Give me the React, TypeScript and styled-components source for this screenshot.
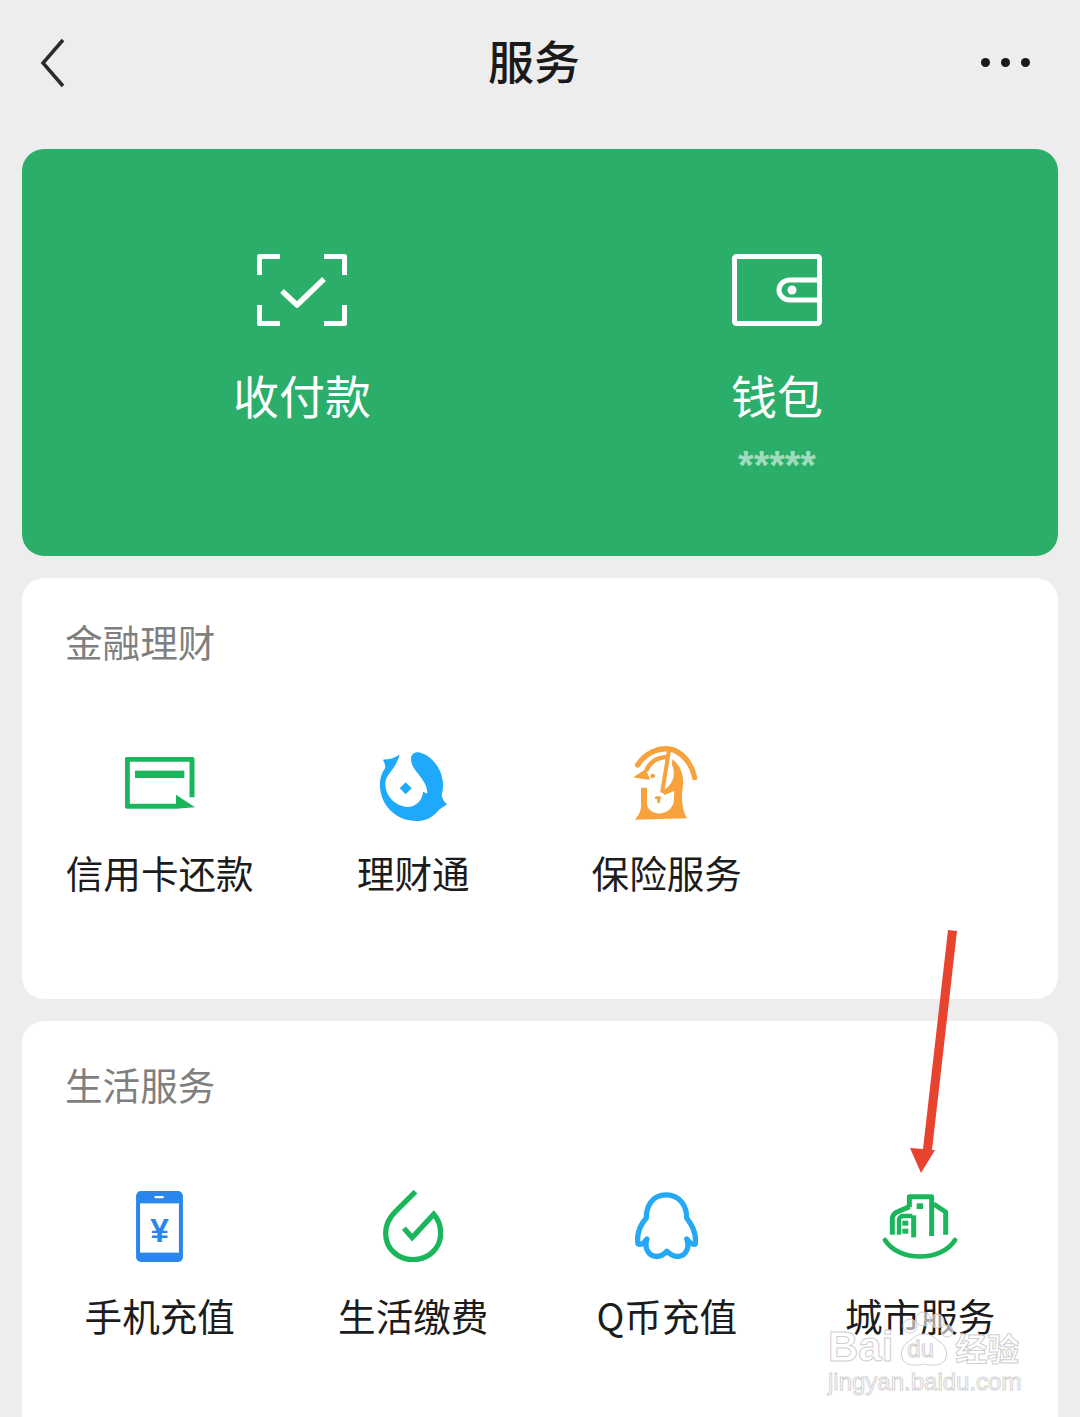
import styled, { createGlobalStyle } from 'styled-components'

const GlobalStyle = createGlobalStyle`
  html, body {
    margin: 0;
    padding: 0;
    background: #ededed;
  }
  body {
    font-family: "Noto Sans CJK SC", "Noto Sans", sans-serif;
  }
`

const Page = styled.div`
  position: relative;
  width: 1080px;
  height: 1417px;
  overflow: hidden;
  background: #ededed;
`

const Header = styled.header`
  display: grid;
  grid-template-columns: 1fr auto 1fr;
  align-items: center;
  height: 125px;
  padding: 0 50px 0 38px;
`

const Back = styled.svg`
  display: block;
  width: 30px;
  height: 50px;
`

const Title = styled.h1`
  margin: 0 0 8px;
  font-size: 46px;
  line-height: 60px;
  font-weight: 500;
  color: #1a1a1a;
`

const More = styled.div`
  display: flex;
  justify-content: flex-end;
  gap: 11px;
`

const Dot = styled.span`
  width: 9px;
  height: 9px;
  border-radius: 50%;
  background: #1a1a1a;
`

const Main = styled.main`
  display: flex;
  flex-direction: column;
  gap: 22px;
  padding: 24px 22px 0;
`

const PayCard = styled.section`
  display: grid;
  grid-template-columns: 475px 475px;
  height: 407px;
  padding: 105px 0 0 42.5px;
  box-sizing: border-box;
  border-radius: 22px;
  background: #2bae6a;
`

const PayItem = styled.div`
  display: flex;
  flex-direction: column;
  align-items: center;
`

const PayLabel = styled.div`
  margin-top: 38px;
  font-size: 46px;
  line-height: 60px;
  color: #fff;
`

const PayHint = styled.div`
  margin-top: 21px;
  font-family: "Liberation Sans", sans-serif;
  font-size: 40px;
  line-height: 40px;
  font-weight: 700;
  color: #9fdcbb;
`

const Section = styled.section`
  height: 421px;
  padding: 39px 11px 0;
  box-sizing: border-box;
  border-radius: 22px;
  background: #fff;
`

const SectionTitle = styled.h2`
  margin: 0 0 0 32px;
  font-size: 37.6px;
  line-height: 48px;
  font-weight: 400;
  color: #7f7f7f;
`

const Grid = styled.div`
  display: grid;
  grid-template-columns: repeat(4, 1fr);
  margin-top: 78px;
`

const Service = styled.div`
  display: flex;
  flex-direction: column;
  align-items: center;
`

const IconSlot = styled.div`
  display: flex;
  align-items: center;
  justify-content: center;
  height: 80px;
`

const ServiceLabel = styled.div`
  margin-top: 25px;
  font-size: 37.6px;
  line-height: 48px;
  color: #1c1c1c;
  white-space: nowrap;
`

const Arrow = styled.svg`
  position: absolute;
  left: 900px;
  top: 925px;
  width: 60px;
  height: 250px;
`

const Watermark = styled.div`
  position: absolute;
  left: 828px;
  top: 1326px;
  width: 200px;
  height: 70px;
`

const MarkRow = styled.div`
  display: flex;
  align-items: center;
  height: 42px;
`

const MarkText = styled.span`
  font-family: "Liberation Sans", sans-serif;
  font-size: 42px;
  line-height: 42px;
  font-weight: 700;
  color: rgba(255, 255, 255, 0.75);
  -webkit-text-stroke: 1px #cfcfcf;
`

const MarkCjk = styled(MarkText)`
  margin-left: 4px;
  font-family: "Noto Sans CJK SC", sans-serif;
  font-size: 32px;
`

const Paw = styled.div`
  position: relative;
  width: 54px;
  height: 42px;
  margin-left: 4px;

  svg {
    overflow: visible;
  }
`

const PawText = styled.span`
  position: absolute;
  left: 10px;
  top: 11px;
  font-family: "Liberation Sans", sans-serif;
  font-size: 24px;
  line-height: 24px;
  color: rgba(255, 255, 255, 0.7);
  -webkit-text-stroke: 1px #cfcfcf;
`

const MarkUrl = styled.div`
  font-family: "Liberation Sans", sans-serif;
  font-size: 24px;
  line-height: 28px;
  color: #fff;
  -webkit-text-stroke: 1px #d4d4d4;
  white-space: nowrap;
`

const ScanIcon = () => (
  <svg width="90" height="72" viewBox="0 0 90 72" fill="none" stroke="#fff" strokeWidth="5" strokeLinejoin="round">
    <path d="M2.5 21V2.5H23M67 2.5H87.5V21M2.5 51V69.5H23M67 69.5H87.5V51" />
    <path d="M25 37L40 51L67 25" strokeWidth="5.5" />
  </svg>
)

const WalletIcon = () => (
  <svg width="90" height="72" viewBox="0 0 90 72" fill="none" stroke="#fff" strokeWidth="5" strokeLinejoin="round">
    <rect x="2.5" y="2.5" width="85" height="67" rx="2" />
    <path d="M87.5 26H58C52 26 47 30.5 47 36C47 41.5 52 46 58 46H87.5" />
    <circle cx="60" cy="36" r="4.5" fill="#fff" stroke="none" />
  </svg>
)

const CardIcon = () => (
  <svg width="70" height="52" viewBox="72 85 210 156" fill="none">
    <path d="M273 206V92H79V233H226" stroke="#1bb55c" strokeWidth="15" strokeLinejoin="round" />
    <rect x="102" y="126" width="148" height="22" fill="#1bb55c" />
    <path d="M225 198L282 236L225 240Z" fill="#1bb55c" />
  </svg>
)

const FishIcon = () => (
  <svg width="80" height="80" viewBox="0 -6 240 240">
    <path
      fill="#1fa9fb"
      d="M80 28C65 40 48 44 30 44C34 52 37 60 37 68C22 88 18 112 22 136C30 190 75 228 130 228C158 228 182 216 198 194L222 178C212 170 208 160 206 150C222 95 190 40 145 24C128 18 114 26 114 42C114 70 140 85 155 115C160 125 163 135 163 146L150 140C148 172 120 192 90 184C55 174 32 140 38 108C42 85 70 70 80 28Z"
    />
    <path fill="#1fa9fb" d="M98 112L116 130L98 148L80 130Z" />
  </svg>
)

const UmbrellaIcon = () => (
  <svg width="80" height="85" viewBox="0 0 240 255" fill="none" stroke="#f7a33d" strokeLinecap="round" strokeLinejoin="round">
    <path d="M32 72C55 35 95 20 125 24C165 28 195 70 203 110" strokeWidth="16" />
    <path d="M60 85C70 62 92 50 118 48" strokeWidth="14" />
    <path d="M125 35L106 150" strokeWidth="12" />
    <path d="M24 108L55 88L66 114Z" fill="#f7a33d" strokeWidth="5" />
    <circle cx="77" cy="105" r="7" fill="#f7a33d" stroke="none" />
    <path d="M88 170H98M95 172V182" strokeWidth="9" />
    <path
      fill="#f7a33d"
      stroke="none"
      d="M136 55C168 78 172 115 166 150C163 182 167 210 180 232L24 236C34 224 42 212 42 196V140L60 140V190C64 224 125 230 140 185L142 150L112 162L104 150C138 135 148 100 135 72Z"
    />
  </svg>
)

const PhoneIcon = () => (
  <svg width="47" height="71" viewBox="80 48 140 212">
    <rect x="80" y="48" width="140" height="212" rx="15" fill="#2a86ea" />
    <rect x="92" y="85" width="116" height="147" fill="#fff" />
    <rect x="135" y="63" width="28" height="7" rx="3" fill="#fff" />
    <text x="150" y="200" textAnchor="middle" fontFamily="Liberation Sans" fontWeight="700" fontSize="100" fill="#2a86ea">
      ¥
    </text>
  </svg>
)

const BillIcon = () => (
  <svg width="60" height="72" viewBox="822 45 181 217" fill="none" stroke="#1bb55c" strokeWidth="16">
    <path d="M885 160L910 188L975 118C990 135 996 155 996 175C996 220 960 255 912 255C865 255 830 220 830 175C830 150 840 130 858 112L920 50" />
  </svg>
)

const QQIcon = () => (
  <svg width="63" height="68" viewBox="76 184 190 204" fill="none" stroke="#25a9f6" strokeWidth="16" strokeLinejoin="round">
    <path d="M170 192C125 192 110 230 110 262C90 285 80 310 85 340C95 345 105 335 112 325C105 345 110 375 140 378C155 378 165 370 172 362C180 370 190 378 205 378C235 375 240 345 232 325C240 335 250 345 258 340C262 310 250 285 232 262C232 230 215 192 170 192Z" />
  </svg>
)

const CityIcon = () => (
  <svg width="90" height="80" viewBox="0 0 270 240" fill="none" stroke="#1bb55c" strokeWidth="15" strokeLinejoin="round">
    <path d="M30 162C70 228 200 228 240 162" strokeLinecap="round" strokeWidth="14" />
    <path d="M103 64V32H170V150" />
    <path d="M116 88V154" />
    <path d="M176 54L212 78V146" />
    <path d="M52 146V98C52 88 58 82 66 78L104 62" />
    <path d="M72 146V100C72 94 78 90 86 90H112" strokeWidth="13" />
    <rect x="125" y="52" width="19" height="17" fill="#1bb55c" stroke="none" />
    <rect x="82" y="104" width="18" height="15" fill="#1bb55c" stroke="none" />
    <rect x="82" y="128" width="18" height="15" fill="#1bb55c" stroke="none" />
  </svg>
)

const finance = [
  { label: '信用卡还款', icon: <CardIcon /> },
  { label: '理财通', icon: <FishIcon /> },
  { label: '保险服务', icon: <UmbrellaIcon /> },
]

const life = [
  { label: '手机充值', icon: <PhoneIcon /> },
  { label: '生活缴费', icon: <BillIcon /> },
  { label: 'Q币充值', icon: <QQIcon /> },
  { label: '城市服务', icon: <CityIcon /> },
]

export default function App() {
  return (
    <Page>
      <GlobalStyle />
      <Header>
        <Back viewBox="0 0 30 50" fill="none" stroke="#2a2a2a" strokeWidth="3.5">
          <path d="M25 2L5 25L25 48" />
        </Back>
        <Title>服务</Title>
        <More>
          <Dot />
          <Dot />
          <Dot />
        </More>
      </Header>
      <Main>
        <PayCard>
          <PayItem>
            <ScanIcon />
            <PayLabel>收付款</PayLabel>
          </PayItem>
          <PayItem>
            <WalletIcon />
            <PayLabel>钱包</PayLabel>
            <PayHint>*****</PayHint>
          </PayItem>
        </PayCard>
        <Section>
          <SectionTitle>金融理财</SectionTitle>
          <Grid>
            {finance.map((item) => (
              <Service key={item.label}>
                <IconSlot>{item.icon}</IconSlot>
                <ServiceLabel>{item.label}</ServiceLabel>
              </Service>
            ))}
          </Grid>
        </Section>
        <Section>
          <SectionTitle>生活服务</SectionTitle>
          <Grid>
            {life.map((item) => (
              <Service key={item.label}>
                <IconSlot>{item.icon}</IconSlot>
                <ServiceLabel>{item.label}</ServiceLabel>
              </Service>
            ))}
          </Grid>
        </Section>
      </Main>
      <Arrow viewBox="900 925 60 250">
        <path d="M948 930L957 931L932 1150L935 1150L921 1173L910 1148L923 1149Z" fill="#e8432f" />
      </Arrow>
      <Watermark>
        <MarkRow>
          <MarkText>Bai</MarkText>
          <Paw>
            <svg width="54" height="42" viewBox="0 0 54 42" fill="rgba(255,255,255,0.6)" stroke="#cfcfcf">
              <circle cx="13" cy="0" r="7" />
              <circle cx="26" cy="-7" r="7" />
              <circle cx="40" cy="-5" r="7" />
              <circle cx="50" cy="5" r="6" />
              <path d="M14 14C20 6 34 6 40 14C48 18 52 26 48 34C44 40 34 40 27 38C20 40 10 40 6 34C2 26 6 18 14 14Z" />
            </svg>
            <PawText>du</PawText>
          </Paw>
          <MarkCjk>经验</MarkCjk>
        </MarkRow>
        <MarkUrl>jingyan.baidu.com</MarkUrl>
      </Watermark>
    </Page>
  )
}
